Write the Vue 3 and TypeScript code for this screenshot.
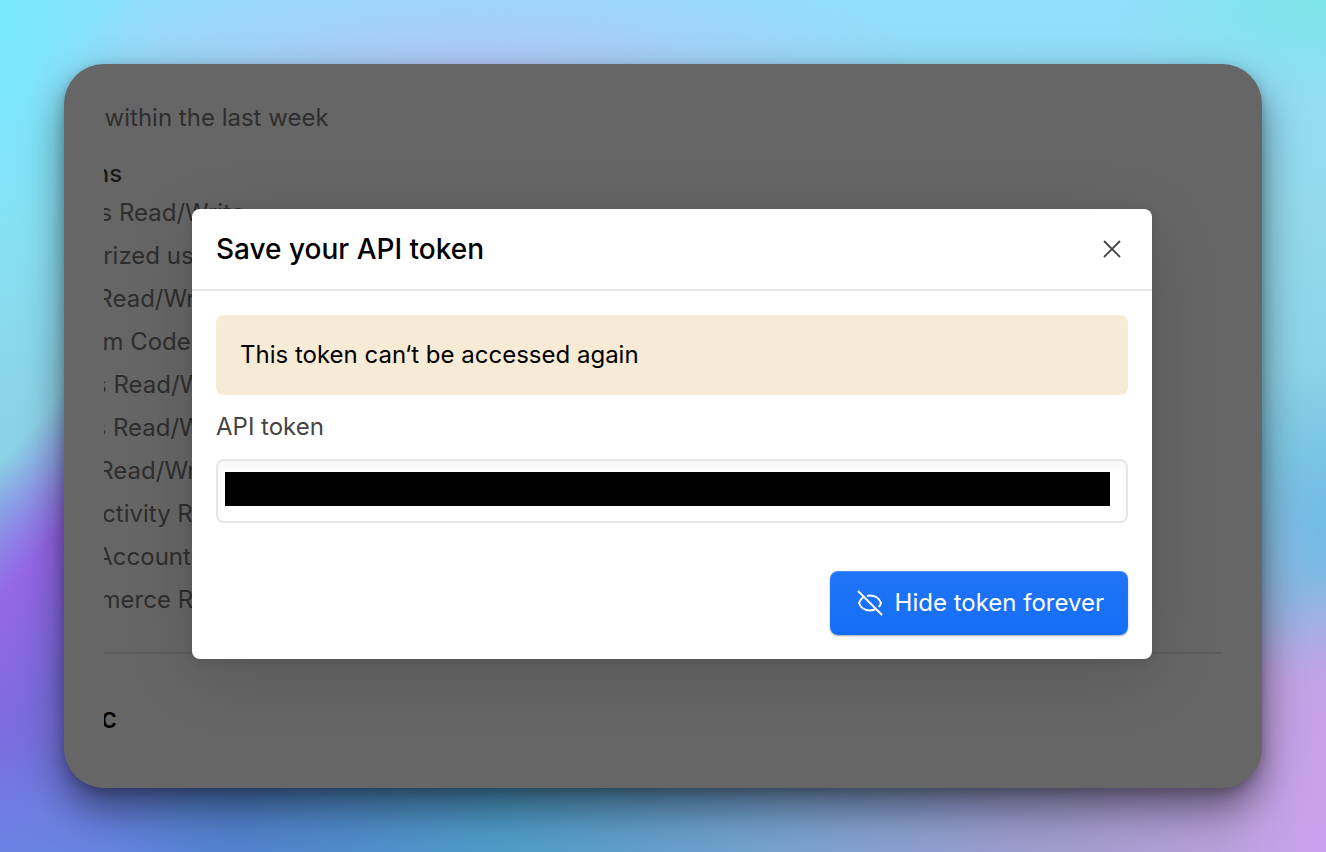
<script setup lang="ts">
import { ref } from 'vue'

const scopes: string[] = [
  'Assets Read/Write',
  'Authorized user Read-only',
  'CMS Read/Write',
  'Custom Code Read/Write',
  'Forms Read/Write',
  'Pages Read/Write',
  'Sites Read/Write',
  'Site Activity Read-only',
  'User Accounts Read/Write',
  'Ecommerce Read/Write',
]
const token = ref('')
</script>

<template>
  <div class="stage">
    <main class="panel">
      <div class="viewport">
        <p class="last-used">Last used within the last week</p>
        <h2 class="perm-title">Permissions</h2>
        <ul class="scopes">
          <li v-for="scope in scopes" :key="scope">{{ scope }}</li>
        </ul>
        <hr class="rule" />
        <h2 class="section-title">c</h2>
      </div>

      <section class="dialog" role="dialog" aria-labelledby="dialog-title">
        <header class="dialog-head">
          <h1 id="dialog-title">Save your API token</h1>
          <button class="close" type="button" aria-label="Close">
            <svg width="20" height="20" viewBox="0 0 20 20" fill="none" stroke="currentColor" stroke-width="1.8">
              <path d="M2 2 18 18M18 2 2 18" />
            </svg>
          </button>
        </header>
        <div class="dialog-body">
          <p class="notice">This token can‘t be accessed again</p>
          <label class="label" for="api-token">API token</label>
          <div class="field">
            <input id="api-token" v-model="token" class="token" type="text" readonly />
          </div>
          <div class="actions">
            <button class="primary" type="button">
              <svg width="28" height="28" viewBox="0 0 28 28" fill="none" stroke="currentColor" stroke-width="2">
                <path d="M2 2 26 26" />
                <path d="M7 8.500C5 9.800 3.600 11.700 3 14c1.500 4.500 6 7.400 11 7.400 1.800 0 3.500-.3 5-.9" />
                <path d="M11 6.900c1-.2 2-.3 3-.3 5 0 9.500 2.900 11 7.400-.4 1.500-1.200 2.800-2.300 3.900" />
              </svg>
              <span>Hide token forever</span>
            </button>
          </div>
        </div>
      </section>
    </main>
  </div>
</template>

<style>
body {
  margin: 0;
}
</style>

<style scoped>
* {
  box-sizing: border-box;
}
h1,
h2,
p,
ul {
  margin: 0;
  padding: 0;
}
.stage {
  min-height: 100vh;
  padding: 64px;
  display: flex;
  font-family: Inter, "Liberation Sans", sans-serif;
  font-size: 24px;
  line-height: 32px;
  background:
    radial-gradient(ellipse 34% 16% at 36% 10%, #b4c4f6 0%, rgba(180, 196, 246, 0) 100%),
    radial-gradient(ellipse 12% 50% at 0% 0%, #76e9ff 0%, rgba(118, 233, 255, 0) 100%),
    radial-gradient(ellipse 16% 12% at 100% 0%, #7ce5e6 0%, rgba(124, 229, 230, 0) 100%),
    radial-gradient(ellipse 10% 34% at 102% 100%, #d19ff0 0%, #c9a1ec 30%, rgba(190, 165, 230, 0) 100%),
    radial-gradient(ellipse 16% 20% at 0% 106%, #6888e6 0%, rgba(104, 136, 230, 0) 100%),
    linear-gradient(130deg, rgba(148, 100, 230, 0) 0%, rgba(148, 100, 230, 0) 41%, rgba(150, 102, 232, 1) 53%, rgba(122, 108, 222, 1) 66%, rgba(106, 132, 226, 0) 90%) 0 0 / 18% 100% no-repeat,
    radial-gradient(ellipse 10% 20% at 101% 62%, #6cbae4 0%, rgba(108, 186, 228, 0) 100%),
    linear-gradient(180deg, rgba(146, 222, 252, 1) 0%, rgba(148, 218, 236, 1) 24%, rgba(138, 208, 230, 1) 54%, rgba(136, 194, 226, 0) 80%),
    linear-gradient(90deg, #6a84e2 0%, #5282ce 18%, #4e9cc8 38%, #7aa2d0 60%, #a29cce 80%, #c4a2e2 100%);
}
.panel {
  position: relative;
  flex: 1;
  min-width: 0;
  padding: 38px 40px 0;
  border-radius: 40px;
  background: #666;
  box-shadow: 0 20px 40px rgba(0, 0, 0, 0.5), 0 4px 12px rgba(0, 0, 0, 0.2);
}
.viewport {
  overflow: hidden;
  white-space: nowrap;
  color: #2e2e2e;
}
.last-used {
  margin-left: -116px;
}
.perm-title {
  margin-top: 24px;
  margin-left: -122px;
  font-size: 24px;
  font-weight: 500;
  color: #1a1a1a;
}
.scopes {
  margin-top: 1px;
  margin-left: -68px;
  list-style: none;
  line-height: 43px;
}
.rule {
  height: 2px;
  margin: 31px 0 48px;
  border: 0;
  background: #5c5c5c;
}
.section-title {
  margin-left: -3px;
  font-size: 28px;
  font-weight: 500;
  color: #000;
}
.dialog {
  position: absolute;
  top: 145px;
  left: 128px;
  right: 110px;
  border-radius: 8px;
  background: #fff;
  color: #000;
  box-shadow: 0 16px 72px rgba(0, 0, 0, 0.14), 0 2px 8px rgba(0, 0, 0, 0.12);
}
.dialog-head {
  display: flex;
  align-items: center;
  justify-content: space-between;
  height: 82px;
  padding: 0 24px;
  border-bottom: 2px solid #e6e6e6;
}
.dialog-head h1 {
  font-size: 28px;
  font-weight: 500;
}
.close {
  display: flex;
  padding: 6px;
  border: 0;
  background: none;
  color: #444;
}
.dialog-body {
  padding: 24px;
}
.notice {
  padding: 24px;
  border-radius: 8px;
  background: #f7ebd6;
}
.label {
  display: block;
  margin: 16px 0;
  color: #444;
}
.field {
  height: 64px;
  padding: 11px 16px 0 7px;
  border: 2px solid #e6e6e6;
  border-radius: 8px;
  background: linear-gradient(#f7f7f7, #fff 12px);
}
.token {
  display: block;
  width: 100%;
  height: 34px;
  padding: 0;
  border: 0;
  background: #000;
  color: #000;
}
.actions {
  display: flex;
  justify-content: flex-end;
  margin-top: 48px;
}
.primary {
  display: flex;
  align-items: center;
  gap: 11px;
  height: 64px;
  padding: 0 24px 0 26px;
  border: 0;
  border-radius: 8px;
  background: linear-gradient(#2174f7, #146ef5);
  box-shadow: 0 1px 2px rgba(0, 0, 0, 0.35), inset 0 1px 1px rgba(255, 255, 255, 0.2);
  color: #fff;
  font: inherit;
}
</style>
